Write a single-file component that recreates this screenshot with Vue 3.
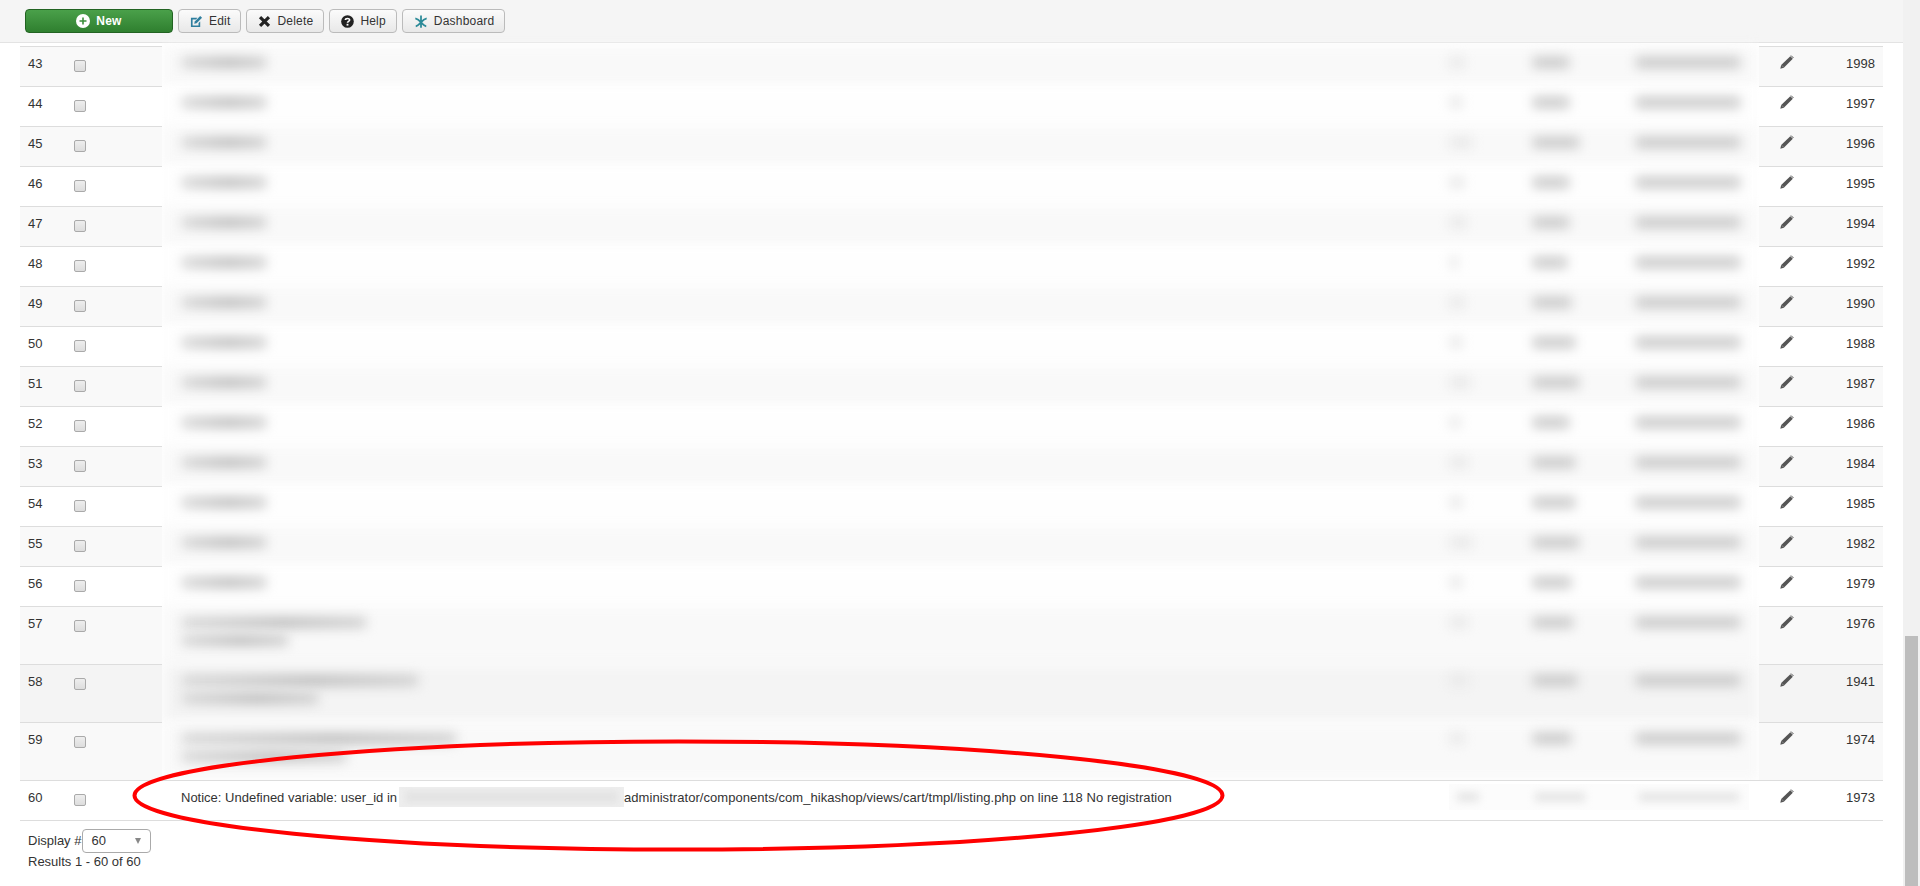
<template>
  <div class="page">
    <div class="main">
      <div class="toolbar">
        <button class="btn btn-new">
          <svg class="ico" viewBox="0 0 14 14"><circle cx="7" cy="7" r="7" fill="#fff" /><path d="M7 3.5v7M3.5 7h7" stroke="#3a8f3a" stroke-width="1.6" /></svg>
          New
        </button>
        <button class="btn">
          <svg class="ico" viewBox="0 0 14 14"><path d="M1 3h7L6.500 4.800H2.800v6.400h6.400V8.500L11 7v6H1z" fill="#2f7e9e" /><path d="M4.500 9.500l.6-2.600L11 1l2 2-5.900 5.900z" fill="#2f7e9e" /></svg>
          Edit
        </button>
        <button class="btn">
          <svg class="ico" viewBox="0 0 14 14"><path d="M2.200 2.200l9.600 9.600M11.800 2.200l-9.600 9.600" stroke="#222" stroke-width="3.400" /></svg>
          Delete
        </button>
        <button class="btn">
          <svg class="ico" viewBox="0 0 14 14"><circle cx="7" cy="7" r="6.800" fill="#222" /><path d="M4.700 5.400C4.800 3.300 9.300 3.200 9.300 5.400 9.300 6.900 7 6.900 7 8.400" fill="none" stroke="#fff" stroke-width="1.700" /><rect x="6" y="9.500" width="2" height="1.900" fill="#fff" /></svg>
          Help
        </button>
        <button class="btn">
          <svg class="ico ico-wide" viewBox="0 0 16 16"><path d="M8 1v14M1.500 4.500C4 5 6 6.500 8 9c2-2.500 4-4 6.500-4.500M2 13.500c1.500-.3 3.500-2 6-4.500 2.500 2.500 4.500 4.200 6 4.500" fill="none" stroke="#2b8a98" stroke-width="2" /></svg>
          Dashboard
        </button>
      </div>

      <div class="rows">
        <div v-for="row in rows" :key="row.num" class="row" :class="row.tone">
          <div class="cell-left">
            <span class="num">{{ row.num }}</span>
            <span class="check"></span>
          </div>
          <div v-if="row.notice" class="cell-mid notice">
            <span class="notice-text">Notice: Undefined variable: user_id in</span>
            <span class="path-blur"><i></i></span>
            <span class="notice-path">administrator/components/com_hikashop/views/cart/tmpl/listing.php on line 118 No registration</span>
            <span class="patch">
              <i class="bar" style="left: 8px; width: 22px"></i>
              <i class="bar" style="left: 86px; width: 50px"></i>
              <i class="bar" style="left: 190px; width: 100px"></i>
            </span>
          </div>
          <div v-else class="cell-mid">
            <div class="name-col">
              <i v-for="(w, i) in row.names" :key="i" class="name-bar" :style="{ width: w + 'px' }"></i>
            </div>
            <div class="col col-a"><i class="soft" :style="{ width: row.a + 'px' }"></i></div>
            <div class="col col-b"><i class="mid-bar" :style="{ width: row.b + 'px' }"></i></div>
            <div class="col col-c"><i class="mid-bar" :style="{ width: '104px' }"></i></div>
          </div>
          <div class="cell-right">
            <svg class="pencil" viewBox="0 0 14 14"><path d="M.3 13.700l.9-3.600L10.300 1.200l2.500 2.500-9 9z" fill="#555" /><path d="M11 .5l2.500 2.500" stroke="#555" stroke-width="1" /><path d="M1.800 10.400l1.800 1.800" stroke="#bbb" stroke-width=".6" /></svg>
            <span class="id">{{ row.id }}</span>
          </div>
        </div>
      </div>

      <div class="footer">
        <div class="display">
          <span>Display #</span>
          <div class="select">60<b class="caret"></b></div>
        </div>
        <div class="results">Results 1 - 60 of 60</div>
      </div>

      <svg class="annotation" width="1903" height="886" viewBox="0 0 1903 886">
        <ellipse cx="678.500" cy="795.500" rx="544" ry="54" fill="none" stroke="#f00" stroke-width="4" />
      </svg>
    </div>
    <div class="scrollbar"><div class="thumb"></div></div>
  </div>
</template>

<script setup>
const ids = [1998, 1997, 1996, 1995, 1994, 1992, 1990, 1988, 1987, 1986, 1984, 1985, 1982, 1979, 1976, 1941, 1974, 1973];
const colA = [14, 12, 22, 14, 16, 8, 14, 12, 20, 10, 18, 12, 22, 12, 18, 18, 14, 12];
const colB = [36, 36, 46, 36, 36, 34, 38, 42, 46, 36, 42, 42, 46, 38, 40, 44, 38, 44];

const rows = ids.map((id, i) => {
  const num = 43 + i;
  let names = [84];
  if (num === 57) names = [184, 106];
  if (num === 58) names = [236, 136];
  if (num === 59) names = [274, 164];
  let tone = i % 2 === 0 ? "odd" : "even";
  if (num === 58) tone = "hover";
  return { num, id, names, tone, a: colA[i], b: colB[i], notice: num === 60 };
});
</script>

<style>
html,
body {
  margin: 0;
  height: 886px;
  overflow: hidden;
  background: #fff;
}
</style>

<style scoped>
.page {
  display: flex;
  height: 886px;
  font-family: "Liberation Sans", Arial, sans-serif;
  font-size: 13px;
  line-height: 18px;
  color: #333;
}

.main {
  position: relative;
  flex: 1;
  min-width: 0;
  overflow: hidden;
}

.scrollbar {
  width: 17px;
  background: #f1f1f1;
  padding: 636px 2px 0;
  box-sizing: border-box;
}

.thumb {
  height: 250px;
  background: #bdbdbd;
}

.toolbar {
  display: flex;
  align-items: center;
  gap: 5px;
  height: 42px;
  padding-left: 25px;
  background: #f5f5f5;
  border-bottom: 1px solid #e3e3e3;
}

.btn {
  display: flex;
  align-items: center;
  justify-content: center;
  gap: 6px;
  height: 24px;
  padding: 0 10px 0 11px;
  font: inherit;
  font-size: 12px;
  letter-spacing: 0.2px;
  color: #333;
  background: linear-gradient(#fbfbfb, #e8e8e8);
  border: 1px solid #bbb;
  border-radius: 4px;
}

.btn-new {
  width: 148px;
  padding: 0;
  font-weight: bold;
  color: #fff;
  background: linear-gradient(#4aa04a, #2f7f2f);
  border-color: #226322;
}

.ico {
  width: 13px;
  height: 13px;
  flex: none;
}

.btn-new .ico {
  width: 14px;
  height: 14px;
}

.ico-wide {
  width: 14px;
  height: 15px;
}

.rows {
  margin: 3px 20px 0;
}

.row {
  display: grid;
  grid-template-columns: 142px 1597px 124px;
  height: 40px;
}

.row:nth-child(15),
.row:nth-child(16),
.row:nth-child(17) {
  height: 58px;
}

.row:last-child {
  border-bottom: 1px solid #ddd;
}

.cell-left,
.cell-right {
  position: relative;
  z-index: 1;
  display: flex;
  align-items: flex-start;
  box-sizing: border-box;
  border-top: 1px solid #ddd;
}

.cell-left {
  padding: 8px 0 0 8px;
}

.num {
  width: 46px;
}

.check {
  width: 12px;
  height: 12px;
  margin-top: 5px;
  box-sizing: border-box;
  background: linear-gradient(#eee, #ddd);
  border: 1px solid #aaa;
  border-radius: 2px;
}

.cell-right {
  padding: 8px 8px 0 21px;
  justify-content: space-between;
}

.pencil {
  width: 14px;
  height: 14px;
}

.odd .cell-left,
.odd .cell-right {
  background: #f9f9f9;
}

.hover .cell-left,
.hover .cell-right {
  background: #f4f4f4;
}

.cell-mid {
  position: relative;
  display: flex;
  overflow-x: clip;
}

.cell-mid::before {
  content: "";
  position: absolute;
  inset: 0;
  filter: blur(6px);
}

.odd .cell-mid::before {
  background: #f9f9f9;
}

.even .cell-mid::before {
  background: #fefefe;
}

.hover .cell-mid::before {
  background: #f4f4f4;
}

.name-col {
  position: relative;
  display: flex;
  flex-direction: column;
  gap: 7px;
  width: 1288px;
  padding: 11px 0 0 20px;
  box-sizing: border-box;
}

.name-bar {
  display: block;
  height: 11px;
  background: linear-gradient(90deg, #d6d6d6, #bdbdbd 55%, #d0d0d0);
  filter: blur(6px);
}

.col {
  position: relative;
  padding-top: 11px;
  box-sizing: border-box;
}

.col-a {
  width: 83px;
}

.col-b {
  width: 103px;
}

.col-c {
  width: 110px;
}

.soft,
.mid-bar {
  display: block;
  height: 11px;
  filter: blur(6px);
}

.soft {
  background: #e8e8e8;
}

.mid-bar {
  background: #c8c8c8;
}

.notice {
  align-items: flex-start;
  padding: 8px 0 0 19px;
  box-sizing: border-box;
  border-top: 1px solid #ddd;
  overflow: clip;
  white-space: pre;
  background: #fff;
  z-index: 1;
}

.notice::before {
  display: none;
}

.notice-text {
  width: 218px;
}

.notice-path {
  letter-spacing: 0.05px;
}

.path-blur {
  width: 225px;
  height: 20px;
  margin-top: -2px;
  overflow: hidden;
  background: #eeeeee;
}

.path-blur i {
  display: block;
  height: 12px;
  margin: 4px 6px;
  background: #e4e4e4;
  filter: blur(3px);
}

.patch {
  position: absolute;
  left: 1287px;
  top: 3px;
  width: 300px;
  height: 26px;
  overflow: hidden;
  background: #fcfcfc;
}

.bar {
  position: absolute;
  top: 9px;
  height: 8px;
  background: #e2e2e2;
  filter: blur(4px);
}

.footer {
  padding: 8px 0 0 28px;
}

.display {
  display: flex;
  align-items: center;
}

.select {
  position: relative;
  width: 69px;
  height: 24px;
  margin-left: 1px;
  padding-left: 8px;
  box-sizing: border-box;
  line-height: 22px;
  background: #fff;
  border: 1px solid #aaa;
  border-radius: 4px;
}

.caret {
  position: absolute;
  top: 8px;
  right: 9px;
  border-top: 6px solid #888;
  border-left: 3.500px solid transparent;
  border-right: 3.500px solid transparent;
}

.annotation {
  position: absolute;
  left: 0;
  top: 0;
  z-index: 5;
  pointer-events: none;
}
</style>
